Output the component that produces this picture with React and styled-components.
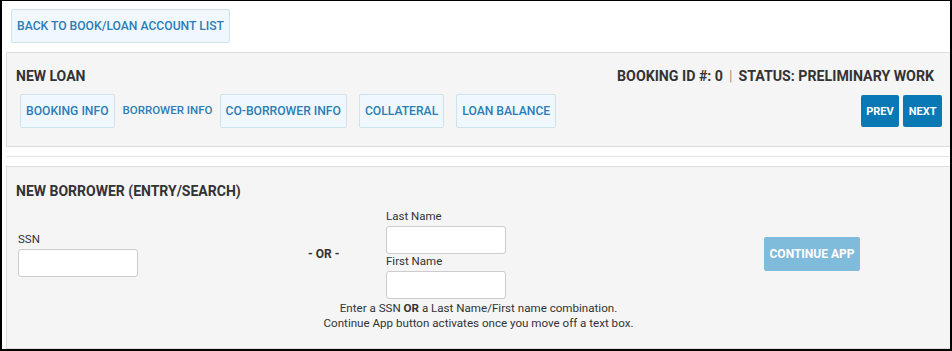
import React from "react";
import styled, { createGlobalStyle } from "styled-components";

const GlobalStyle = createGlobalStyle`
  html, body { margin: 0; padding: 0; background: #ffffff; }
  body { font-family: Roboto, "Liberation Sans", Arial, sans-serif; color: #333; }
  * { box-sizing: border-box; }
`;

const Frame = styled.div`
  width: 952px;
  height: 351px;
  border: 2px solid #000;
  border-top-width: 1px;
  display: flex;
  flex-direction: column;
  padding-top: 8px;
  overflow: hidden;
  background: #fff;
`;

const LinkButton = styled.button`
  font-family: inherit;
  font-size: 12.15px;
  font-weight: 500;
  color: #2b7db8;
  background: #f0f8fd;
  border: 1px solid #cfe3ef;
  border-radius: 2px;
  height: 34px;
  padding: 0 5px;
  text-transform: uppercase;
  white-space: nowrap;
  cursor: pointer;
`;

const BackButton = styled(LinkButton)`
  align-self: flex-start;
  margin-left: 9px;
`;

const Panel = styled.section`
  margin-left: 4px;
  margin-top: ${(p) => p.$top || 0}px;
  background: #f5f5f5;
  border: 1px solid #dddddd;
  border-right: 0;
  flex: ${(p) => (p.$grow ? 1 : "none")};
  padding: ${(p) => p.$pad};
`;

const HeaderRow = styled.div`
  display: flex;
  justify-content: space-between;
  align-items: center;
  padding: 0 16px 0 9px;
  line-height: 20px;
`;

const Heading = styled.h2`
  margin: 0;
  font-size: 14px;
  font-weight: 700;
  line-height: 20px;
  color: #333;
`;

const Status = styled.div`
  font-size: 14.2px;
  font-weight: 700;
  color: #333;
`;

const Sep = styled.span`
  font-weight: 400;
  color: #b3927a;
  margin: 0 6px;
`;

const TabsRow = styled.nav`
  margin-top: 8px;
  display: flex;
  align-items: center;
  gap: 12px;
  padding: 0 8px 0 13px;
`;

const ActiveTab = styled.span`
  font-size: 11.5px;
  font-weight: 500;
  color: #2b7db8;
  margin: -2px -5px 0 -4px;
  white-space: nowrap;
`;

const Pager = styled.div`
  margin-left: auto;
  display: flex;
  gap: 4px;
`;

const PrimaryButton = styled.button`
  font-family: inherit;
  font-size: ${(p) => p.$fs}px;
  font-weight: 700;
  color: #fff;
  background: ${(p) => (p.$disabled ? "#7fbcdb" : "#0a78b5")};
  border: 0;
  border-radius: 2px;
  height: ${(p) => p.$h}px;
  padding: 0 ${(p) => p.$px}px;
  white-space: nowrap;
  cursor: pointer;
`;

const Divider = styled.hr`
  margin: 9px 0 9px 4px;
  border: 0;
  height: 1px;
  background: #e6e6e6;
`;

const Title = styled(Heading)`
  padding-left: 9px;
`;

const FormRow = styled.div`
  margin-top: 8px;
  display: grid;
  grid-template-columns: 290px 78px 120px auto;
  align-items: center;
  padding-left: 11px;
`;

const Field = styled.div`
  display: flex;
  flex-direction: column;
`;

const Label = styled.label`
  font-size: 11.5px;
  line-height: 15px;
  margin-bottom: 2px;
  color: #333;
`;

const Input = styled.input`
  width: 120px;
  height: 28px;
  border: 1px solid #cccccc;
  border-radius: 3px;
  background: #fff;
  font-family: inherit;
  font-size: 12px;
  padding: 0 6px;
`;

const Or = styled.span`
  font-size: 12px;
  font-weight: 700;
  color: #333;
`;

const ButtonCell = styled.div`
  margin-left: 258px;
`;

const Help = styled.p`
  margin: 2px 0 0;
  text-align: center;
  font-size: 11.6px;
  line-height: 15px;
  color: #333;
`;

export default function App() {
  return (
    <>
      <GlobalStyle />
      <Frame>
        <BackButton>Back to Book/Loan Account List</BackButton>
        <Panel $top={9} $pad="13px 0 18px 0">
          <HeaderRow>
            <Heading>NEW LOAN</Heading>
            <Status>
              BOOKING ID #: 0<Sep>|</Sep>STATUS: PRELIMINARY WORK
            </Status>
          </HeaderRow>
          <TabsRow>
            <LinkButton>Booking Info</LinkButton>
            <ActiveTab>BORROWER INFO</ActiveTab>
            <LinkButton>Co-Borrower Info</LinkButton>
            <LinkButton>Collateral</LinkButton>
            <LinkButton>Loan Balance</LinkButton>
            <Pager>
              <PrimaryButton $h={32} $px={5.5} $fs={11}>PREV</PrimaryButton>
              <PrimaryButton $h={32} $px={5.5} $fs={11}>NEXT</PrimaryButton>
            </Pager>
          </TabsRow>
        </Panel>
        <Divider />
        <Panel $grow $pad="14px 0 0 0">
          <Title>NEW BORROWER (ENTRY/SEARCH)</Title>
          <FormRow>
            <Field>
              <Label>SSN</Label>
              <Input />
            </Field>
            <Or>- OR -</Or>
            <Field>
              <Label>Last Name</Label>
              <Input />
              <Label>First Name</Label>
              <Input />
            </Field>
            <ButtonCell>
              <PrimaryButton $disabled $h={34} $px={5.5} $fs={12}>CONTINUE APP</PrimaryButton>
            </ButtonCell>
          </FormRow>
          <Help>
            Enter a SSN <b>OR</b> a Last Name/First name combination.
            <br />
            Continue App button activates once you move off a text box.
          </Help>
        </Panel>
      </Frame>
    </>
  );
}
